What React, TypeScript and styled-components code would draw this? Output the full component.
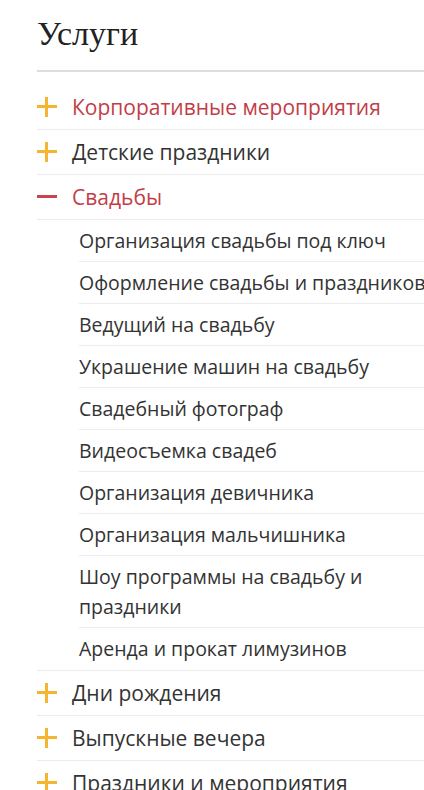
import React from 'react'
import styled, { createGlobalStyle } from 'styled-components'

const GlobalStyle = createGlobalStyle`
  html, body {
    margin: 0;
    padding: 0;
    background: #ffffff;
    overflow: hidden;
  }
  body {
    font-family: "Open Sans", "Liberation Sans", sans-serif;
    color: #333333;
  }
`

const Page = styled.div`
  width: 470px;
  padding: 14px 0 0 37px;
  box-sizing: border-box;
`

const Title = styled.h2`
  margin: 0;
  font-family: "Liberation Serif", "DejaVu Serif", serif;
  font-weight: 400;
  font-size: 34px;
  line-height: 40px;
  color: #222222;
  padding-bottom: 16px;
  border-bottom: 2px solid #dddddd;
`

const Menu = styled.ul`
  list-style: none;
  margin: 13px 0 0;
  padding: 0;
`

const Item = styled.li`
  border-bottom: 1px solid #ececec;
`

const ItemHead = styled.div<{ $active?: boolean }>`
  display: flex;
  align-items: center;
  gap: 15px;
  padding: 6px 0;
  font-size: 21px;
  line-height: 32px;
  color: ${p => (p.$active ? '#c23d48' : '#333333')};
`

const Toggle = styled.span<{ $open?: boolean }>`
  position: relative;
  width: 20px;
  height: 20px;
  flex: none;

  &::before {
    content: '';
    position: absolute;
    left: 0;
    right: 0;
    top: 8px;
    height: 3px;
    background: ${p => (p.$open ? '#c8434d' : '#f5b52e')};
  }

  &::after {
    content: '';
    display: ${p => (p.$open ? 'none' : 'block')};
    position: absolute;
    top: 0;
    bottom: 0;
    left: 8px;
    width: 3px;
    background: #f5b52e;
  }
`

const SubMenu = styled.ul`
  list-style: none;
  margin: 0;
  padding: 0 0 0 42px;
  border-top: 1px solid #ececec;
`

const SubItem = styled.li<{ $wide?: boolean }>`
  font-size: 19.5px;
  line-height: 30px;
  padding: 6px 0 5px;
  color: #333333;
  width: 360px;
  white-space: ${p => (p.$wide ? 'nowrap' : 'normal')};

  & + & {
    border-top: 1px solid #ececec;
  }

  &:last-child {
    padding-bottom: 6px;
  }
`

const weddings: { name: string; wide?: boolean }[] = [
  { name: 'Организация свадьбы под ключ' },
  { name: 'Оформление свадьбы и праздников', wide: true },
  { name: 'Ведущий на свадьбу' },
  { name: 'Украшение машин на свадьбу' },
  { name: 'Свадебный фотограф' },
  { name: 'Видеосъемка свадеб' },
  { name: 'Организация девичника' },
  { name: 'Организация мальчишника' },
  { name: 'Шоу программы на свадьбу и праздники' },
  { name: 'Аренда и прокат лимузинов' },
]

const before = [
  { name: 'Корпоративные мероприятия', active: true },
  { name: 'Детские праздники' },
]

const after = ['Дни рождения', 'Выпускные вечера', 'Праздники и мероприятия']

export default function App() {
  return (
    <>
      <GlobalStyle />
      <Page>
        <Title>Услуги</Title>
        <Menu>
          {before.map(item => (
            <Item key={item.name}>
              <ItemHead $active={item.active}>
                <Toggle />
                {item.name}
              </ItemHead>
            </Item>
          ))}
          <Item>
            <ItemHead $active>
              <Toggle $open />
              Свадьбы
            </ItemHead>
            <SubMenu>
              {weddings.map(s => (
                <SubItem key={s.name} $wide={s.wide}>
                  {s.name}
                </SubItem>
              ))}
            </SubMenu>
          </Item>
          {after.map(name => (
            <Item key={name}>
              <ItemHead>
                <Toggle />
                {name}
              </ItemHead>
            </Item>
          ))}
        </Menu>
      </Page>
    </>
  )
}
